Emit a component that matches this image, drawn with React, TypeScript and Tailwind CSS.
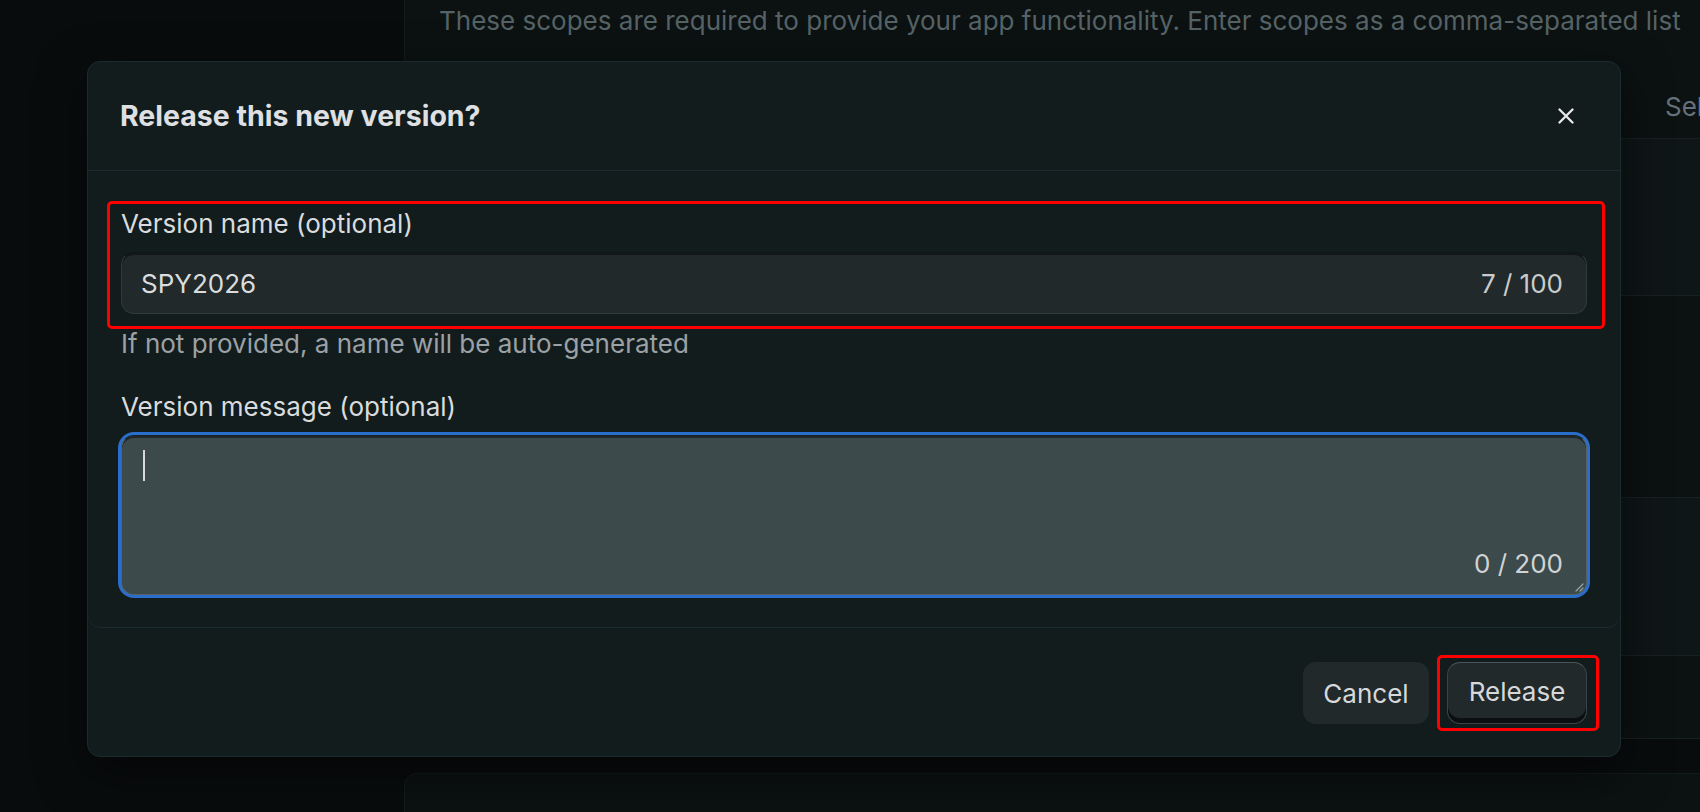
import React from "react";

function Row({ h, tone, children }: { h: string; tone: "dot" | "hatch"; children?: React.ReactNode }) {
  return (
    <div
      className={
        "relative shrink-0 border-b border-[#182122] " +
        h +
        " " +
        (tone === "dot" ? "bg-[#0c1112]" : "bg-[#0f1617]")
      }
    >
      {children}
    </div>
  );
}

export default function App() {
  return (
    <div className="relative h-[812px] w-full overflow-hidden bg-[#090c0d] font-['Inter',sans-serif]">
      {/* Background page */}
      <div className="flex h-full">
        <div className="w-[404px] shrink-0" />
        <div className="flex min-w-0 flex-1 flex-col">
          <div className="flex flex-col border-l border-[#141b1c]">
            <Row h="h-[139px]" tone="dot">
              <p className="whitespace-nowrap pl-[34px] pt-[1px] text-[26px] leading-[39px] text-[#566366]">
                These scopes are required to provide your app functionality. Enter scopes as a comma-separated list
              </p>
              <p className="mt-[47px] whitespace-nowrap pl-[1260px] text-[26px] leading-[39px] text-[#66727a]">
                Selected scopes
              </p>
            </Row>
            <Row h="h-[157px]" tone="hatch" />
            <Row h="h-[202px]" tone="dot" />
            <Row h="h-[158px]" tone="hatch" />
            <Row h="h-[83px]" tone="dot" />
          </div>
          <div className="mt-[34px] h-[60px] rounded-tl-[13px] border-l border-t border-[#141b1c] bg-[#0c1112]" />
        </div>
      </div>

      {/* Dialog */}
      <div className="absolute left-[87px] top-[61px] w-[1534px] rounded-[13px] border border-[#1b2c2f] bg-[#131c1d] shadow-[0_16px_48px_rgba(0,0,0,0.55)]">
        <div className="flex h-[109px] items-center justify-between border-b border-[#1b2c2f] pl-[32px] pr-[46px]">
          <h2 className="text-[28.5px] font-bold leading-none text-[#dfe0e4]">Release this new version?</h2>
          <svg width="16" height="16" viewBox="0 0 16 16" fill="none">
            <path d="M1.5 1.5L14.5 14.5M14.5 1.5L1.5 14.5" stroke="#e8e8ea" strokeWidth="2.3" strokeLinecap="round" />
          </svg>
        </div>

        <div className="rounded-b-[13px] border-b border-[#1b2c2f] px-[33px] pb-[32px] pt-[33px]">
          <div className="relative">
            <label className="block text-[26px] leading-[39px] text-[#d9dbdd]">Version name (optional)</label>
            <div className="mt-[9px] flex h-[62px] items-center justify-between rounded-[13px] border border-[#30393b] border-t-[#0f1415] bg-[#21292b] pl-[19px] pr-[23px] shadow-[inset_0_2px_0_#12181a]">
              <span className="text-[26px] text-[#dadcdd]">SPY2026</span>
              <span className="text-[26px] text-[#c9cccd]">7 / 100</span>
            </div>
            <div className="pointer-events-none absolute -bottom-[15px] -left-[14px] -right-[18px] -top-[3px] rounded-[5px] border-[3px] border-[#ff0000]" />
          </div>
          <p className="mt-[10px] text-[26px] leading-[39px] text-[#9ba1a5]">
            If not provided, a name will be auto-generated
          </p>
          <label className="mt-[24px] block text-[26px] leading-[39px] text-[#d9dbdd]">Version message (optional)</label>
          <div className="relative mt-[9px] h-[160px] rounded-[13px] border border-[#566263] border-t-[#1a2122] bg-[#3c4a4b] shadow-[0_0_0_3px_#2a6ecb,inset_0_2px_0_#1f2728]">
            <div className="absolute left-[21px] top-[14px] h-[31px] w-[2px] bg-[#d6d8d9]" />
            <span className="absolute bottom-[11px] right-[23px] text-[26px] leading-[39px] text-[#d0d3d4]">0 / 200</span>
            <svg className="absolute bottom-[2px] right-[2px]" width="10" height="10" viewBox="0 0 10 10" fill="none">
              <path d="M9 2L2 9M9 6L6 9" stroke="#9aa2a4" strokeWidth="1.2" strokeLinecap="round" />
            </svg>
          </div>
        </div>

        <div className="flex items-center justify-end gap-[18px] px-[33px] pb-[32px] pt-[34px]">
          <button className="flex h-[62px] w-[126px] items-center justify-center rounded-[13px] bg-[#21292b] text-[26px] text-[#d6d8da]">
            Cancel
          </button>
          <div className="relative">
            <button className="flex h-[62px] w-[140px] items-center justify-center rounded-[13px] border border-[#3a4345] border-t-[#4c5557] bg-[#21292b] pb-[4px] text-[26px] text-[#d6d8da] shadow-[inset_0_-5px_0_#0b0f10]">
              Release
            </button>
            <div className="pointer-events-none absolute -bottom-[7px] -left-[10px] -right-[12px] -top-[7px] rounded-[5px] border-[3px] border-[#ff0000]" />
          </div>
        </div>
      </div>
    </div>
  );
}
